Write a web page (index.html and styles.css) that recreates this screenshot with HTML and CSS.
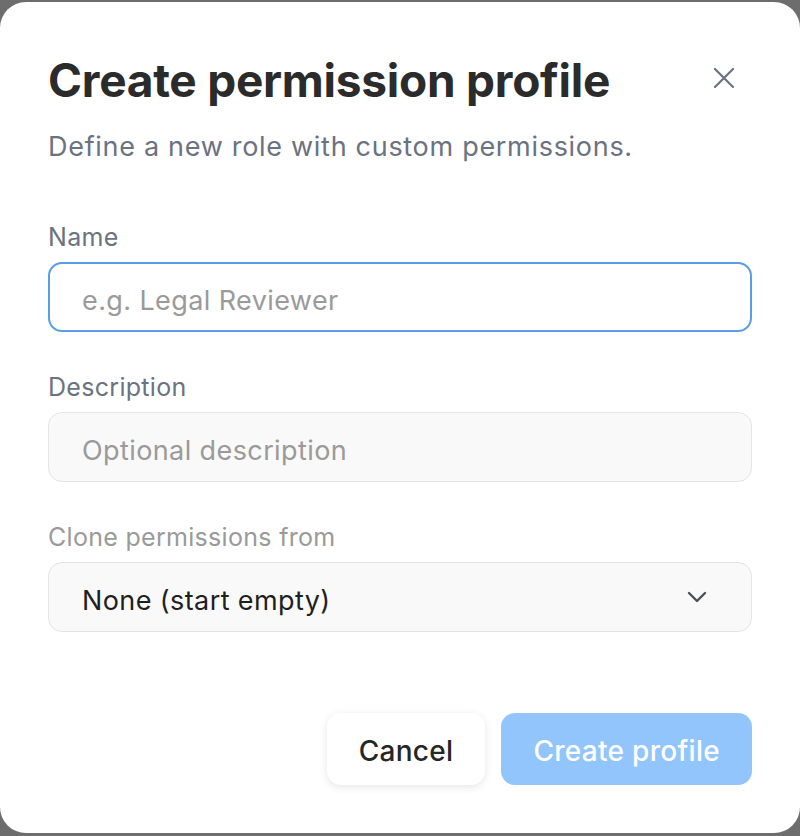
FILE: index.html
```html
<!DOCTYPE html>
<html lang="en">
<head>
<meta charset="utf-8">
<title>Create permission profile</title>
<link rel="stylesheet" href="styles.css">
</head>
<body>
<div class="dialog">
  <div class="header">
    <div class="titles">
      <h1 class="title">Create permission profile</h1>
      <p class="subtitle">Define a new role with custom permissions.</p>
    </div>
    <button class="close" aria-label="Close">
      <svg width="24" height="24" viewBox="0 0 24 24" fill="none" stroke="currentColor" stroke-width="2.2" stroke-linecap="round"><path d="M3 3L21 21M21 3L3 21"/></svg>
    </button>
  </div>
  <div class="field">
    <label class="label">Name</label>
    <div class="input focused"><span class="placeholder">e.g. Legal Reviewer</span></div>
  </div>
  <div class="field">
    <label class="label">Description</label>
    <div class="input muted"><span class="placeholder">Optional description</span></div>
  </div>
  <div class="field">
    <label class="label light">Clone permissions from</label>
    <div class="input muted select"><span class="value">None (start empty)</span>
      <svg class="chev" width="20" height="12" viewBox="0 0 20 12" fill="none" stroke="currentColor" stroke-width="2.4" stroke-linecap="round" stroke-linejoin="round"><path d="M2 2L10 10L18 2"/></svg>
    </div>
  </div>
  <div class="actions">
    <button class="btn cancel">Cancel</button>
    <button class="btn primary">Create profile</button>
  </div>
</div>
</body>
</html>
```
FILE: styles.css
```css
html, body {
  margin: 0;
  padding: 0;
}
body {
  background: #6d6d6d;
  font-family: "Inter", "Noto Sans", sans-serif;
  height: 836px;
  overflow: hidden;
}
.dialog {
  box-sizing: border-box;
  margin-top: 2px;
  width: 800px;
  height: 831px;
  background: #ffffff;
  border-radius: 26px;
  padding: 52px 48px 48px 48px;
  display: flex;
  flex-direction: column;
}
.header {
  display: flex;
  justify-content: space-between;
  align-items: flex-start;
}
.title {
  margin: 0;
  font-size: 46px;
  line-height: 52px;
  font-weight: 700;
  color: #2b2b2b;
  letter-spacing: -0.25px;
}
.subtitle {
  margin: 24px 0 0 0;
  font-size: 27px;
  line-height: 34px;
  color: #6b7280;
  letter-spacing: 0.7px;
}
.close {
  border: 0;
  background: none;
  padding: 0;
  margin: 12px 16px 0 0;
  color: #6b7280;
  width: 24px;
  height: 24px;
  display: flex;
}
.field {
  display: flex;
  flex-direction: column;
  gap: 10px;
  margin-top: 40px;
}
.header + .field {
  margin-top: 58px;
}
.label {
  font-size: 25px;
  line-height: 30px;
  color: #6b7280;
  letter-spacing: 0.3px;
}
.label.light {
  color: #9a9a9a;
}
.input {
  box-sizing: border-box;
  height: 70px;
  border-radius: 14px;
  display: flex;
  align-items: center;
  padding: 0 32px;
  font-size: 27px;
  letter-spacing: 0.4px;
}
.input.focused {
  border: 2px solid #5a9de6;
  background: #ffffff;
}
.input.muted {
  border: 1px solid #e4e4e4;
  background: #f9f9f9;
  padding-left: 33px;
}
.placeholder {
  color: #9a9a9a;
  padding-top: 6px;
}
.select {
  justify-content: space-between;
}
.value {
  color: #1f1f1f;
  padding-top: 6px;
}
.chev {
  color: #4b5058;
  margin-right: 12px;
}
.actions {
  margin-top: auto;
  display: flex;
  justify-content: flex-end;
  gap: 16px;
}
.btn {
  font-family: inherit;
  height: 72px;
  border-radius: 14px;
  border: 0;
  font-size: 28px;
  font-weight: 500;
  letter-spacing: 0.3px;
  padding: 4px 32px 0 32px;
}
.cancel {
  background: #ffffff;
  color: #262626;
  box-shadow: 0 2px 8px rgba(0, 0, 0, 0.10);
}
.primary {
  background: #93c5fd;
  color: #ffffff;
}
```
